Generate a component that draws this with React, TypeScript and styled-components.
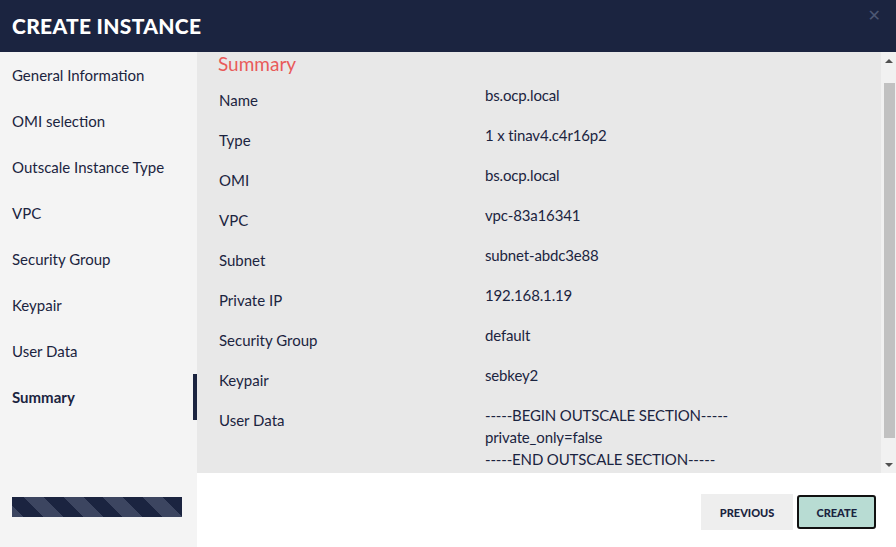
import React from "react";
import styled, { createGlobalStyle } from "styled-components";

const Global = createGlobalStyle`
  html, body { margin: 0; padding: 0; }
  body { font-family: Lato, "Noto Sans", sans-serif; color: #1b2440; background: #fff; }
  * { box-sizing: border-box; }
`;

const Modal = styled.div`
  width: 896px;
  height: 547px;
  display: flex;
  flex-direction: column;
  overflow: hidden;
`;

const Header = styled.header`
  height: 52px;
  flex: 0 0 52px;
  background: #1b2440;
  display: flex;
  align-items: center;
  justify-content: space-between;
  padding: 0 14px 2px 12px;
  position: relative;
`;

const Title = styled.h1`
  margin: 0;
  font-size: 21px;
  font-weight: 900;
  color: #ffffff;
  letter-spacing: 0.3px;
`;

const Close = styled.span`
  position: absolute;
  top: 6px;
  right: 15px;
  font-size: 16px;
  font-weight: 700;
  color: #4c5773;
  font-family: "DejaVu Sans", sans-serif;
`;

const Main = styled.div`
  flex: 1;
  display: flex;
  min-height: 0;
`;

const Sidebar = styled.nav`
  width: 197px;
  flex: 0 0 197px;
  background: #f4f4f4;
  display: flex;
  flex-direction: column;
`;

const NavItem = styled.div<{ $active?: boolean }>`
  height: 46px;
  display: flex;
  align-items: center;
  padding-left: 12px;
  font-size: 15px;
  font-weight: ${(p) => (p.$active ? 700 : 400)};
  color: #1b2440;
  border-right: 4px solid ${(p) => (p.$active ? "#1b2440" : "transparent")};
`;

const Progress = styled.div`
  margin: auto 15px 30px 12px;
  height: 20px;
  background: repeating-linear-gradient(
    -135deg,
    #1b2440 0px,
    #1b2440 14px,
    #3c4560 14px,
    #3c4560 28px
  );
`;

const Right = styled.div`
  flex: 1;
  display: flex;
  flex-direction: column;
  min-width: 0;
`;

const Panel = styled.div`
  height: 421px;
  flex: 0 0 421px;
  display: flex;
  background: #e8e8e8;
`;

const Body = styled.div`
  flex: 1;
  padding: 0 0 0 21px;
  overflow: hidden;
`;

const Heading = styled.h2`
  margin: 0 0 8px 0;
  font-size: 19px;
  font-weight: 400;
  color: #e85a5a;
  line-height: 24px;
`;

const Row = styled.div`
  display: grid;
  grid-template-columns: 267px 1fr;
  min-height: 40px;
`;

const Label = styled.div`
  font-size: 15px;
  line-height: 20px;
  padding: 6px 0 0 1px;
  color: #1b2440;
`;

const Value = styled.div`
  font-size: 15px;
  line-height: 22px;
  color: #1b2440;
  letter-spacing: -0.15px;
`;

const Track = styled.div`
  width: 15px;
  flex: 0 0 15px;
  background: #f1f1f1;
  display: flex;
  flex-direction: column;
  align-items: center;
`;

const Arrow = styled.div<{ $down?: boolean }>`
  width: 0;
  height: 0;
  border-left: 4px solid transparent;
  border-right: 4px solid transparent;
  ${(p) =>
    p.$down
      ? "border-top: 4px solid #505050; margin-top: auto; margin-bottom: 6px;"
      : "border-bottom: 4px solid #505050; margin-top: 7px;"}
`;

const Thumb = styled.div`
  width: 11px;
  height: 355px;
  margin-top: 20px;
  margin-left: 2px;
  background: #c1c1c1;
`;

const Footer = styled.div`
  flex: 1;
  background: #ffffff;
  display: flex;
  justify-content: flex-end;
  align-items: center;
  gap: 4px;
  padding: 4px 20px 0 0;
`;

const Button = styled.button<{ $primary?: boolean }>`
  height: ${(p) => (p.$primary ? "34px" : "36px")};
  padding: 0 ${(p) => (p.$primary ? "17px" : "19px")};
  font-family: Lato, "Noto Sans", sans-serif;
  font-size: 11px;
  font-weight: 900;
  color: #1b2440;
  cursor: pointer;
  background: ${(p) => (p.$primary ? "#b8dcd3" : "#eeeeee")};
  border: ${(p) => (p.$primary ? "2px solid #111" : "none")};
  border-radius: ${(p) => (p.$primary ? "3px" : "0")};
`;

const nav = [
  "General Information",
  "OMI selection",
  "Outscale Instance Type",
  "VPC",
  "Security Group",
  "Keypair",
  "User Data",
  "Summary",
];

const rows: [string, React.ReactNode][] = [
  ["Name", "bs.ocp.local"],
  ["Type", "1 x tinav4.c4r16p2"],
  ["OMI", "bs.ocp.local"],
  ["VPC", "vpc-83a16341"],
  ["Subnet", "subnet-abdc3e88"],
  ["Private IP", "192.168.1.19"],
  ["Security Group", "default"],
  ["Keypair", "sebkey2"],
  [
    "User Data",
    <>
      -----BEGIN OUTSCALE SECTION-----
      <br />
      private_only=false
      <br />
      -----END OUTSCALE SECTION-----
    </>,
  ],
];

export default function App() {
  return (
    <>
      <Global />
      <Modal>
        <Header>
          <Title>CREATE INSTANCE</Title>
          <Close>✕</Close>
        </Header>
        <Main>
          <Sidebar>
            {nav.map((n) => (
              <NavItem key={n} $active={n === "Summary"}>
                {n}
              </NavItem>
            ))}
            <Progress />
          </Sidebar>
          <Right>
            <Panel>
              <Body>
                <Heading>Summary</Heading>
                {rows.map(([l, v]) => (
                  <Row key={l}>
                    <Label>{l}</Label>
                    <Value>{v}</Value>
                  </Row>
                ))}
              </Body>
              <Track>
                <Arrow />
                <Thumb />
                <Arrow $down />
              </Track>
            </Panel>
            <Footer>
              <Button>PREVIOUS</Button>
              <Button $primary>CREATE</Button>
            </Footer>
          </Right>
        </Main>
      </Modal>
    </>
  );
}
